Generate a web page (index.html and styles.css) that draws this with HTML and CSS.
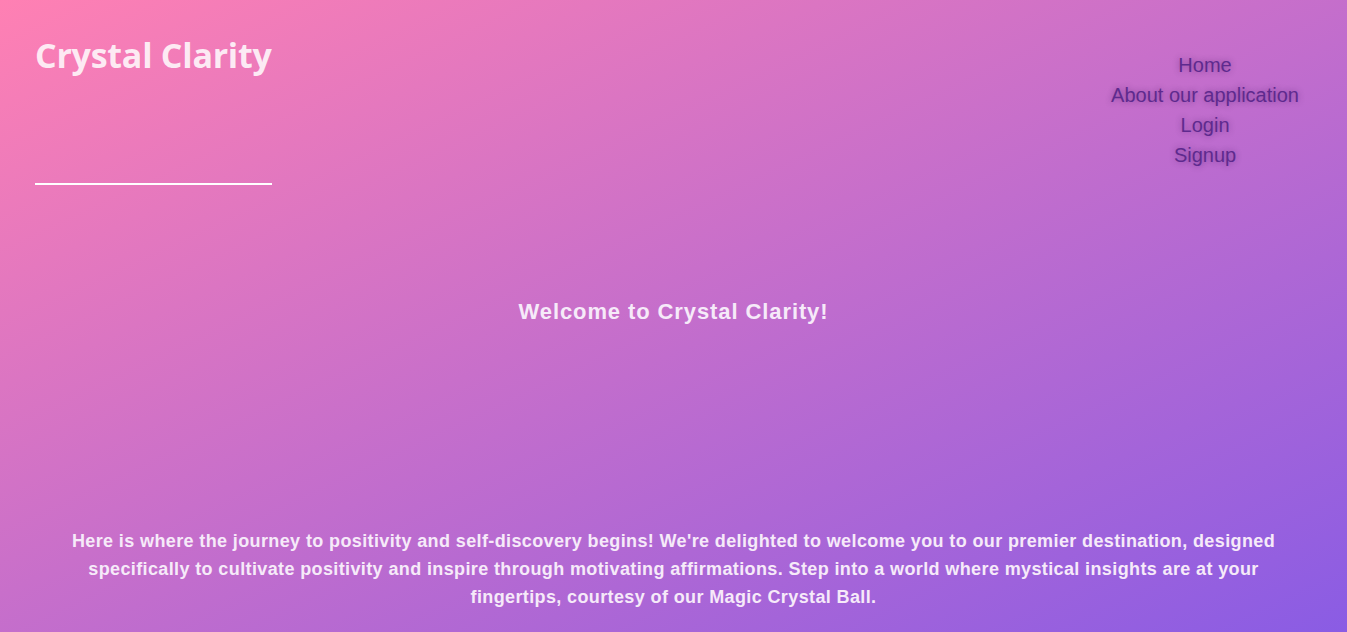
FILE: index.html
```html
<!DOCTYPE html>
<html lang="en">
<head>
<meta charset="utf-8">
<title>Crystal Clarity</title>
<link rel="stylesheet" href="styles.css">
</head>
<body>
<div class="page">
  <header class="header">
    <div class="brand">
      <h1 class="title">Crystal Clarity</h1>
      <div class="rule"></div>
    </div>
    <nav class="nav">
      <a href="#">Home</a>
      <a href="#">About our application</a>
      <a href="#">Login</a>
      <a href="#">Signup</a>
    </nav>
  </header>
  <main class="main">
    <h2 class="welcome">Welcome to Crystal Clarity!</h2>
    <p class="intro">Here is where the journey to positivity and self-discovery begins! We're delighted to welcome you to our premier destination, designed specifically to cultivate positivity and inspire through motivating affirmations. Step into a world where mystical insights are at your fingertips, courtesy of our Magic Crystal Ball.</p>
  </main>
</div>
</body>
</html>
```
FILE: styles.css
```css
html, body {
  margin: 0;
  padding: 0;
  height: 100%;
}
body {
  background: linear-gradient(to bottom right, #ff80b3, #8a5ce4);
  font-family: "Liberation Sans", Arial, sans-serif;
  overflow: hidden;
}
.page {
  height: 632px;
  display: flex;
  flex-direction: column;
}
.header {
  display: flex;
  justify-content: space-between;
  align-items: flex-start;
  padding: 0 48px 0 35px;
}
.brand {
  display: flex;
  flex-direction: column;
  width: 237px;
}
.title {
  margin: 30px 0 0;
  font-family: "Open Sans", "Noto Sans", sans-serif;
  font-weight: 700;
  font-size: 34px;
  line-height: 50px;
  color: rgba(255, 255, 255, 0.85);
  white-space: nowrap;
  letter-spacing: -0.25px;
}
.rule {
  margin-top: 103px;
  height: 2px;
  background: #ffffff;
}
.nav {
  display: flex;
  flex-direction: column;
  align-items: center;
  padding-top: 50px;
}
.nav a {
  font-size: 20px;
  line-height: 30px;
  color: #5e2a8e;
  text-decoration: none;
  text-shadow: 0 0 6px rgba(60, 20, 90, 0.45);
}
.main {
  flex: 1;
  display: flex;
  flex-direction: column;
  align-items: center;
}
.welcome {
  margin: 112px 0 0;
  font-size: 22px;
  line-height: 30px;
  font-weight: 700;
  letter-spacing: 0.9px;
  color: #f6eaf9;
}
.intro {
  margin: 200px 0 0;
  padding: 0 60px;
  text-align: center;
  font-size: 18px;
  line-height: 28px;
  font-weight: 700;
  letter-spacing: 0.38px;
  color: #f6eaf9;
}
```
